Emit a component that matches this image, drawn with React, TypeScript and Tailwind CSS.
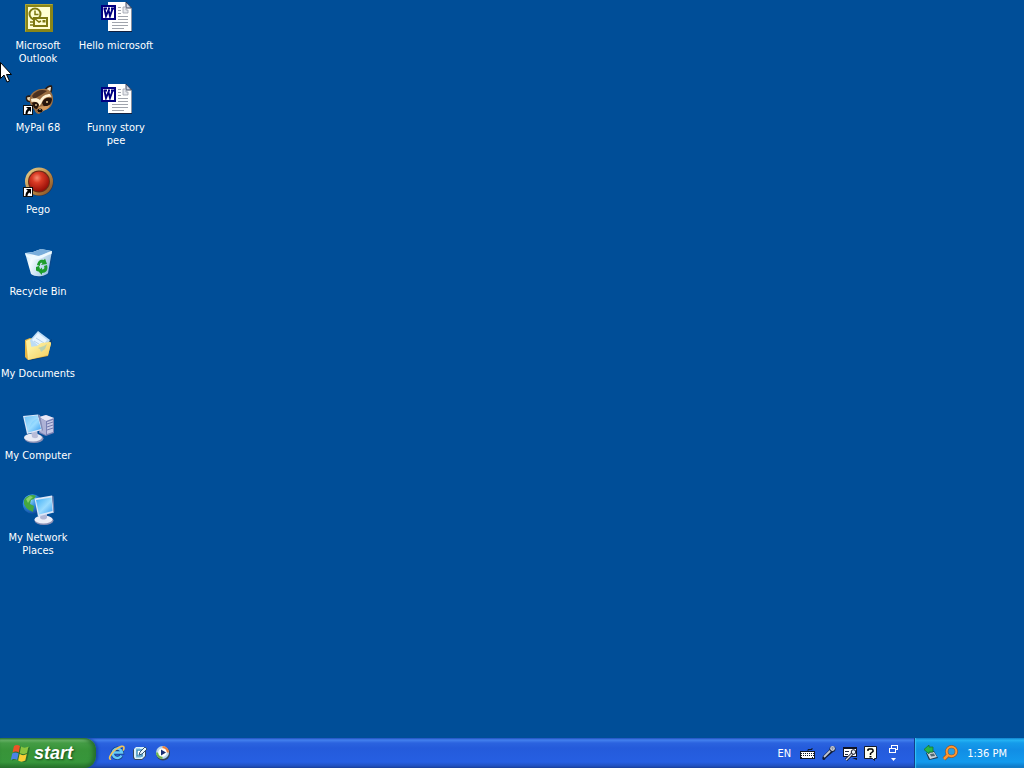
import type { ReactNode } from 'react';

function ShortcutArrow() {
  return (
    <g>
      <rect x="1.500" y="21.500" width="9" height="9" fill="#fff" stroke="#111" strokeWidth="1" />
      <path d="M4 23h5v5l-1.6-1.600C6 27.500 5.500 28.500 5.500 30H3.500c0-2.500.8-4 2.300-5.200z" fill="#000" />
    </g>
  );
}

function Art({ children }: { children: ReactNode }) {
  return (
    <svg viewBox="0 0 32 32" className="h-8 w-8 overflow-visible" aria-hidden="true">
      {children}
    </svg>
  );
}

function OutlookIcon() {
  return (
    <Art>
      <rect x="3" y="2" width="28" height="28" fill="#8a8618" />
      <path d="M3.500 29.500V2.500h27" fill="none" stroke="#aaa638" />
      <rect x="6" y="5" width="22" height="22" fill="#ffffd2" />
      <circle cx="13" cy="12" r="5.500" fill="#ffffd2" stroke="#7d7912" strokeWidth="2" />
      <path d="M13 8.500V12.500h3.500" fill="none" stroke="#7d7912" strokeWidth="1.500" />
      <rect x="12" y="16" width="13" height="8" fill="#ffffd2" stroke="#7d7912" strokeWidth="2" />
      <path d="M12 16l5 4 2-1" fill="none" stroke="#7d7912" strokeWidth="1.500" />
      <rect x="20.500" y="18" width="3" height="2.500" fill="#7d7912" />
      <path d="M8 20h3M8 23h3" stroke="#7d7912" strokeWidth="1.300" />
    </Art>
  );
}

function WordIcon() {
  return (
    <Art>
      <path d="M9 1h17l6 6v23H9z" fill="#13213f" />
      <path d="M8 0h18l5.500 6v23H8z" fill="#fff" />
      <path d="M26 0v6h5.500z" fill="#cfd6e6" stroke="#18223a" strokeWidth=".8" />
      <path d="M18 5.500h3M18 8.500h3M18 11.500h3M12 20.500h16M12 23.500h16M12 26.500h12M18 17.500h10M18 14.500h10" stroke="#a0a4ad" strokeWidth="1" />
      <path d="M23 5v6h5V8h-2V5z" fill="#e6e8ed" stroke="#9ca1ac" strokeWidth=".8" />
      <rect x="1" y="3" width="15" height="15" fill="#000080" />
      <rect x="3" y="5" width="11" height="11" fill="#fff" />
      <path d="M3.500 6.500H7M8 6.500h2M11 6.500h3M4.500 7l1.500 7 2.500-6L10 14l2.500-7" fill="none" stroke="#000080" strokeWidth="1.900" />
    </Art>
  );
}

function RaccoonIcon() {
  return (
    <Art>
      <path d="M22 6c2-4 6-5.500 8-4.500 1 3 0 6-1.500 9z" fill="#2b1a10" />
      <path d="M24 6.500c1-2.500 3.500-4 5-3.500 0 2-.5 4-1.500 6z" fill="#eee0c8" />
      <path d="M9 18c-4 1-6-2-5-5.500 2-2 5-1.500 8 0z" fill="#2b1a10" />
      <path d="M9 17c-2.500 0-4-1-4-3.500 2-1 4-.5 5.500 1z" fill="#ead8b5" />
      <path d="M8 13c2-6 9-9 16-8 5 1 7.500 6 7 11-.5 6-4 9-8 10l-6 4c-3 0-4-3-5-5-3-2-5-7-4-12z" fill="#9a6e43" />
      <path d="M10 12C14 6 20 5 25 7l-6 4-7 4z" fill="#4c3120" />
      <path d="M9 15c3-1 7-1 9 1 2-4 6-6 10-6l1.500 3c-5-1-8 1-10 6l-2 3c-1-4-4-5-8-4z" fill="#fff1d4" />
      <path d="M10 19c3-2 6-1 7 2l-2 4c-3 0-4-3-5-6zM20 19c2-5 6-6 10-4.500 0 5-3 8-8 8z" fill="#26150d" />
      <circle cx="14" cy="21" r=".9" fill="#e8c78c" />
      <circle cx="25" cy="18" r="1" fill="#e8c78c" />
      <path d="M16 24c3-3 9-1 12-3-1 4-5 5-7 6l-4 2-2-2z" fill="#d49a5d" />
      <ellipse cx="18" cy="26.500" rx="2.600" ry="2" fill="#140d0c" />
      <path d="M17 25.500h2" stroke="#a5968b" strokeWidth=".8" />
      <ShortcutArrow />
    </Art>
  );
}

function PegoIcon() {
  return (
    <Art>
      <defs>
        <radialGradient id="pegoBall" cx=".4" cy=".32" r=".7">
          <stop offset="0" stopColor="#f78b70" />
          <stop offset=".35" stopColor="#da3b25" />
          <stop offset="1" stopColor="#930c06" />
        </radialGradient>
        <linearGradient id="pegoRim" x1="0" y1="0" x2="1" y2="1">
          <stop offset="0" stopColor="#ecd692" />
          <stop offset=".6" stopColor="#b58240" />
          <stop offset="1" stopColor="#7b4520" />
        </linearGradient>
      </defs>
      <circle cx="17.500" cy="16" r="14" fill="#2c354d" />
      <circle cx="17" cy="15.500" r="14" fill="url(#pegoRim)" />
      <circle cx="17" cy="15.500" r="11" fill="#6a2c18" />
      <circle cx="17" cy="15.500" r="10" fill="url(#pegoBall)" />
      <ShortcutArrow />
    </Art>
  );
}

function RecycleIcon() {
  return (
    <Art>
      <defs>
        <linearGradient id="bin" x1="0" y1="0" x2="1" y2=".4">
          <stop offset="0" stopColor="#b5dcf8" />
          <stop offset=".35" stopColor="#f5fcff" />
          <stop offset="1" stopColor="#a0c7e5" />
        </linearGradient>
      </defs>
      <path d="M4 6l12 1L30 3l-4 22-8 4-9-3z" fill="#173e77" opacity=".45" transform="translate(1 1)" />
      <path d="M3 5l8-1 8-3 11 2-4 22c-2 3-12 5-17 1z" fill="url(#bin)" />
      <path d="M4 5l7-1 8-3 10 2-12 5z" fill="#78addb" />
      <path d="M3 5c3 3 8 4 13 3 5-.5 9-4 14-5l-.5 3c-5 1-8 4-13 5C12 12 6 10 4 8z" fill="#eefaff" />
      <path d="M15 17c1-5 4-6 7-5l1-1.500 2 5.500-6 1 1.500-2c-2-1-2.500 0-2.500 3zM25 17c1.500 5-1 8-5 8v2l-4-4 4-3.500v2c2 0 3-1 2-3.500zM14 19l3-1 1 3-2 2.500-2-1z" fill="#1d9d2b" />
    </Art>
  );
}

function DocumentsIcon() {
  return (
    <Art>
      <defs>
        <linearGradient id="folderFront" x1="0" y1="0" x2="1" y2="1">
          <stop offset="0" stopColor="#fff9b2" />
          <stop offset="1" stopColor="#f3cb5a" />
        </linearGradient>
      </defs>
      <path d="M6 31l19-4 5-15v-3z" fill="#12315c" opacity=".5" />
      <path d="M3 10l5-2 3 1 15 1 3 3-3 13L6 30 3 27z" fill="#e5b544" />
      <path d="M4 11l4-2 3 2v16l-5 2z" fill="#fff09b" />
      <path d="M8 10L16 1l12 9-8 12-10-2z" fill="#bddcf5" />
      <path d="M10 10l6-7 9 7-6 8z" fill="#e8f5ff" />
      <path d="M12 11l8 5M14 8l8 5" stroke="#b4d0ea" />
      <path d="M8 17l7-1 4-3 9-1c1 0 1 1 1 2l-3 11L6 30z" fill="url(#folderFront)" />
      <path d="M16 18l6-2 3-2-2 5-4 3-1-3z" fill="#a6cbbd" opacity=".75" />
    </Art>
  );
}

function ScreenGradient({ id }: { id: string }) {
  return (
    <linearGradient id={id} x1="0" y1="0" x2="1" y2="1">
      <stop offset="0" stopColor="#3dadf5" />
      <stop offset=".55" stopColor="#9bdcff" />
      <stop offset="1" stopColor="#3a9df0" />
    </linearGradient>
  );
}

function ComputerIcon() {
  return (
    <Art>
      <defs><ScreenGradient id="computerScreen" /></defs>
      <path d="M17 5l7-2 8 3v15l-8 3-7-3z" fill="#7880b5" />
      <path d="M17 5l7-2 8 3-8 3z" fill="#e8e8f7" />
      <path d="M18 6l6 3v14l-6-3z" fill="#aeb2d6" />
      <path d="M25 10l6-2v12l-6 2z" fill="#c5c8e6" />
      <path d="M25 12l6-2M25 15l6-2M25 18l6-2" stroke="#737aad" />
      <ellipse cx="12" cy="26.500" rx="9.500" ry="4.500" fill="#8a90b5" />
      <ellipse cx="11" cy="25.500" rx="9" ry="4" fill="#e8ebf5" />
      <path d="M9 18l6-1 1 8c-2 2-5 1-6 0z" fill="#b8bdd8" />
      <path d="M1 4l15-1.500L20 18 5 22z" fill="#dbe7f8" />
      <path d="M16 2.500l2 .5 3 15-1 1z" fill="#8089b4" />
      <path d="M2.500 5l13-1.500 3.500 13.500L6 20.500z" fill="url(#computerScreen)" />
      <path d="M2.500 5l13-1.500 1 3C9 8 8 14 6 20z" fill="#c5eaff" opacity=".35" />
    </Art>
  );
}

function NetworkIcon() {
  return (
    <Art>
      <defs>
        <ScreenGradient id="networkScreen" />
        <radialGradient id="globe" cx=".35" cy=".3" r=".8">
          <stop offset="0" stopColor="#91d9fa" />
          <stop offset=".5" stopColor="#2884d8" />
          <stop offset="1" stopColor="#103f91" />
        </radialGradient>
      </defs>
      <circle cx="10.500" cy="10" r="9.800" fill="url(#globe)" />
      <path d="M2 6c3-5 9-6 12-4l-2 3-3 1-1 4 4 2-1 6c-4-2-7-3-9-8z" fill="#45a841" />
      <path d="M4 5l4-3 3 1-3 3-2 3z" fill="#88d06c" />
      <ellipse cx="22" cy="26.500" rx="9.500" ry="4.500" fill="#8d91b4" />
      <ellipse cx="21.500" cy="25.500" rx="9" ry="4" fill="#eceef8" />
      <path d="M19 19l6-2v7c-2 2-5 2-7 0z" fill="#b1b7d6" />
      <path d="M12.500 4.500l17.500-3 2 17-16 4z" fill="#dbe7f8" />
      <path d="M30 1.500l1.500 1 .8 15-1 1z" fill="#7180ad" />
      <path d="M14 6l15.500-2.500 1 13.500-13.500 3.500z" fill="url(#networkScreen)" />
    </Art>
  );
}

type Item = { name: string; icon: ReactNode };

const columns: Item[][] = [
  [
    { name: 'Microsoft Outlook', icon: <OutlookIcon /> },
    { name: 'MyPal 68', icon: <RaccoonIcon /> },
    { name: 'Pego', icon: <PegoIcon /> },
    { name: 'Recycle Bin', icon: <RecycleIcon /> },
    { name: 'My Documents', icon: <DocumentsIcon /> },
    { name: 'My Computer', icon: <ComputerIcon /> },
    { name: 'My Network Places', icon: <NetworkIcon /> },
  ],
  [
    { name: 'Hello microsoft', icon: <WordIcon /> },
    { name: 'Funny story pee', icon: <WordIcon /> },
  ],
];

function DesktopItem({ name, icon }: Item) {
  return (
    <button type="button" className="flex h-[82px] w-[76px] flex-col items-center gap-[5px] pt-[2px] text-[11px] leading-[13px] text-white">
      {icon}
      <span>{name}</span>
    </button>
  );
}

function WindowsFlag() {
  return (
    <svg viewBox="0 0 20 20" className="h-5 w-5" aria-hidden="true">
      <g opacity=".4" transform="translate(1 1)">
        <path d="M4 3c2-2 4-1 6 0L8 17c-2-2-5-2-7 0zM11 4c2 1 5 1 8-1l-3 14c-3 2-5 1-7 0z" fill="#113814" />
      </g>
      <path d="M4 3c2-1.500 4-1.500 6 0L8.800 9.500C7 8 4.500 8 2.500 9.500z" fill="#ee5427" />
      <path d="M11 3.500c2 1.500 5 1.500 7.500 0L17 10c-2.500 1.500-5 1.500-7.200 0z" fill="#8ac43f" />
      <path d="M2.300 10.500c2-1.500 4.300-1.500 6.300 0L7.200 17C5.500 15.500 3 15.500.8 17z" fill="#4b83e7" />
      <path d="M9.600 11c2.200 1.500 4.800 1.500 7.200 0L15.300 17.500c-2.500 1.500-5 1.500-7.200 0z" fill="#f8ce35" />
    </svg>
  );
}

function ExplorerIcon() {
  return (
    <svg viewBox="0 0 16 16" className="h-4 w-4 overflow-visible" aria-hidden="true">
      <path d="M12.500 10.500A4.700 4.700 0 1 1 13 7.500H5" fill="none" stroke="#173e82" strokeWidth="4" />
      <path d="M12.500 10.500A4.700 4.700 0 1 1 13 7.500H5" fill="none" stroke="#65c9fa" strokeWidth="2.600" />
      <path d="M2 14C-1 15 1 9 6 5s9-5 9-2c0 1-.5 2-1 2.500" fill="none" stroke="#f0c45b" strokeWidth="1.600" />
    </svg>
  );
}

function ShowDesktopIcon() {
  return (
    <svg viewBox="0 0 16 16" className="h-4 w-4" aria-hidden="true">
      <path d="M3 3h11v8l-4 4H3l-2-2V5z" fill="#34465c" />
      <path d="M2 4l2-2h8l1 1v8l-3 3H3l-1-2z" fill="#d9f0fa" />
      <path d="M5 5h5v6H5z" fill="#fff" stroke="#3c90bd" strokeWidth="1.500" />
      <path d="M7 10l1-3 5-5 2 2-5 5z" fill="#e9f8ff" stroke="#335573" />
      <path d="M4 4h4M4 12h5" stroke="#6db8dc" />
    </svg>
  );
}

function MediaPlayerIcon() {
  return (
    <svg viewBox="0 0 16 16" className="h-4 w-4" aria-hidden="true">
      <circle cx="8" cy="8.500" r="7" fill="#33445c" />
      <circle cx="7.500" cy="7.500" r="6.500" fill="#b9d8ee" />
      <path d="M7.500 1a6.500 6.500 0 0 1 6.500 6.500h-3A3.500 3.500 0 0 0 7.500 4z" fill="#ed803f" />
      <path d="M1 7.500A6.500 6.500 0 0 0 7.500 14v-3A3.500 3.500 0 0 1 4 7.500z" fill="#70b54c" />
      <circle cx="7.500" cy="7.500" r="4.300" fill="#fff" />
      <path d="M6 4.500l5 3-5 3z" fill="#172c73" />
    </svg>
  );
}

function KeyboardIcon() {
  return (
    <svg viewBox="0 0 16 16" className="h-4 w-4" aria-hidden="true">
      <path d="M8 6V4.500h4V3" fill="none" stroke="#101828" />
      <rect x="0" y="6" width="15" height="8" fill="#101828" />
      <rect x="1" y="7" width="13" height="6" fill="#fff" />
      <path d="M1 8.500h13M1 10.500h13M1 12.500h2M12 12.500h2" stroke="#101828" strokeDasharray="1 1" />
    </svg>
  );
}

function MicrophoneIcon() {
  return (
    <svg viewBox="0 0 16 16" className="h-4 w-4" aria-hidden="true">
      <path d="M2 11l7-7 3 3-7 6c-1 1-1 2-2 2-2 0-2-2-1-4z" fill="#101b35" />
      <path d="M3 12l7-7" stroke="#c1c8d6" strokeWidth="1.800" />
      <circle cx="11.500" cy="4" r="3" fill="#16223c" />
      <circle cx="11.500" cy="3.500" r="2.400" fill="#c9ceda" />
      <path d="M10 3h3M11.500 2v3" stroke="#7e899d" strokeWidth=".7" />
    </svg>
  );
}

function ToolsIcon() {
  return (
    <svg viewBox="0 0 16 16" className="h-4 w-4" aria-hidden="true">
      <rect x="1.500" y="2.500" width="13" height="9" fill="#fff" stroke="#101426" />
      <path d="M1 3h14" stroke="#101426" strokeWidth="2" />
      <path d="M3 6.500h4M3 9.500h3" stroke="#202b43" />
      <path d="M4 15l7-7" stroke="#101426" strokeWidth="3" />
      <path d="M4 15l7-7" stroke="#d7dce8" strokeWidth="1.500" />
      <circle cx="11.500" cy="7" r="2.300" fill="#e9edf6" stroke="#101426" />
      <path d="M10 13h5v2z" fill="#101426" />
    </svg>
  );
}

function HelpIcon() {
  return (
    <svg viewBox="0 0 16 16" className="h-4 w-4" aria-hidden="true">
      <path d="M1.500 1.500h12v12h-2v2l-2-2h-8z" fill="#fffff0" stroke="#10182a" />
      <path d="M5 6V4.500L6 4h3l1 1v1.500L7.500 8.500V10" fill="none" stroke="#000" strokeWidth="1.500" />
      <rect x="6.500" y="11" width="2" height="1.500" fill="#000" />
    </svg>
  );
}

function HardwareIcon() {
  return (
    <svg viewBox="0 0 16 16" className="h-4 w-4" aria-hidden="true">
      <path d="M3 8l8-2 4 7-9 2z" fill="#1e3850" />
      <path d="M4 8l7-1 3 5-7 2z" fill="#cbd6dd" />
      <path d="M7 9l4-.5 1 2.500-4 .5z" fill="#526873" />
      <path d="M1 4.500L6 0v2h4v5H6v2z" fill="#27b548" stroke="#187338" strokeWidth=".8" />
    </svg>
  );
}

function SearchIcon() {
  return (
    <svg viewBox="0 0 16 16" className="h-4 w-4" aria-hidden="true">
      <path d="M2 14l4-4" stroke="#8b5532" strokeWidth="4" />
      <circle cx="9.500" cy="6.500" r="4.800" fill="#269ee2" stroke="#93552b" strokeWidth="3.200" />
      <circle cx="9.500" cy="6.500" r="4.800" fill="none" stroke="#ff982f" strokeWidth="2" />
      <path d="M2 14l4-4" stroke="#ff982f" strokeWidth="2.500" />
    </svg>
  );
}

function BarButton({ label, children }: { label: string; children: ReactNode }) {
  return (
    <button type="button" aria-label={label} className="flex h-5 w-4 items-center justify-center">
      {children}
    </button>
  );
}

function Taskbar() {
  return (
    <footer className="flex h-[30px] items-stretch bg-[linear-gradient(180deg,#1e4fbe_0,#4381ee_2px,#2b63df_5px,#245bdb_10px,#265fe2_24px,#2050bf_28px,#183f9b_100%)] text-white">
      <button
        type="button"
        className="flex w-24 items-center gap-1 rounded-r-xl bg-[linear-gradient(180deg,#2f7b34_0,#6fb96d_2px,#449c45_5px,#389439_12px,#37963b_24px,#28742c_100%)] pl-[10px] text-[18px] leading-5 font-bold text-white italic shadow-[inset_-3px_0_4px_#246c2b,2px_0_3px_#1948aa]"
      >
        <WindowsFlag />
        <span className="text-shadow-[1px_1px_2px_#174c19] font-['Liberation_Sans',sans-serif]">start</span>
      </button>
      <nav aria-label="Quick launch" className="flex items-center gap-[7px] pl-[13px]">
        <BarButton label="Internet Explorer"><ExplorerIcon /></BarButton>
        <BarButton label="Show Desktop"><ShowDesktopIcon /></BarButton>
        <BarButton label="Media Player"><MediaPlayerIcon /></BarButton>
      </nav>
      <div className="ml-auto flex items-center gap-[5px] pr-4 text-[11px] leading-[13px]">
        <button type="button" className="mr-1">EN</button>
        <BarButton label="Keyboard"><KeyboardIcon /></BarButton>
        <BarButton label="Microphone"><MicrophoneIcon /></BarButton>
        <BarButton label="Tools"><ToolsIcon /></BarButton>
        <BarButton label="Help"><HelpIcon /></BarButton>
        <div className="ml-[5px] flex flex-col items-center gap-1">
          <button type="button" aria-label="Restore">
            <svg viewBox="0 0 9 9" className="h-[9px] w-[9px]" shapeRendering="crispEdges" aria-hidden="true">
              <path d="M2.500 3V.5h6v4H7M.5 3.500h6v4h-6z" fill="none" stroke="#fff" />
            </svg>
          </button>
          <button type="button" aria-label="Options">
            <svg viewBox="0 0 5 4" className="h-1 w-[5px]" aria-hidden="true">
              <path d="M0 0h5L2.500 3z" fill="#fff" />
            </svg>
          </button>
        </div>
      </div>
      <div className="flex items-center gap-[3px] border-l border-[#123f8a] bg-[linear-gradient(180deg,#0b77c9_0,#25b4f4_2px,#159bea_5px,#118ee5_12px,#139aed_24px,#0e71bd_100%)] pr-[17px] pl-2 text-[11px] leading-[13px] shadow-[inset_1px_0_1px_#37c5f5]">
        <BarButton label="Safely Remove Hardware"><HardwareIcon /></BarButton>
        <BarButton label="Search"><SearchIcon /></BarButton>
        <time dateTime="13:36" className="ml-[6px]">1:36 PM</time>
      </div>
    </footer>
  );
}

export default function App() {
  return (
    <div className="relative flex min-h-screen flex-col bg-[#004e98] font-['DejaVu_Sans_Condensed','Noto_Sans',sans-serif]">
      <main className="flex flex-1 items-start gap-[2px]">
        {columns.map((items, i) => (
          <div key={i} className="flex flex-col">
            {items.map((item) => (
              <DesktopItem key={item.name} {...item} />
            ))}
          </div>
        ))}
      </main>
      <Taskbar />
      <svg viewBox="0 0 12 21" className="pointer-events-none absolute top-[62px] left-0 h-[21px] w-3" aria-hidden="true">
        <path d="M.5.5v16L4 13l3 7 2.500-1-3-6.500h5z" fill="#fff" stroke="#000" />
      </svg>
    </div>
  );
}
